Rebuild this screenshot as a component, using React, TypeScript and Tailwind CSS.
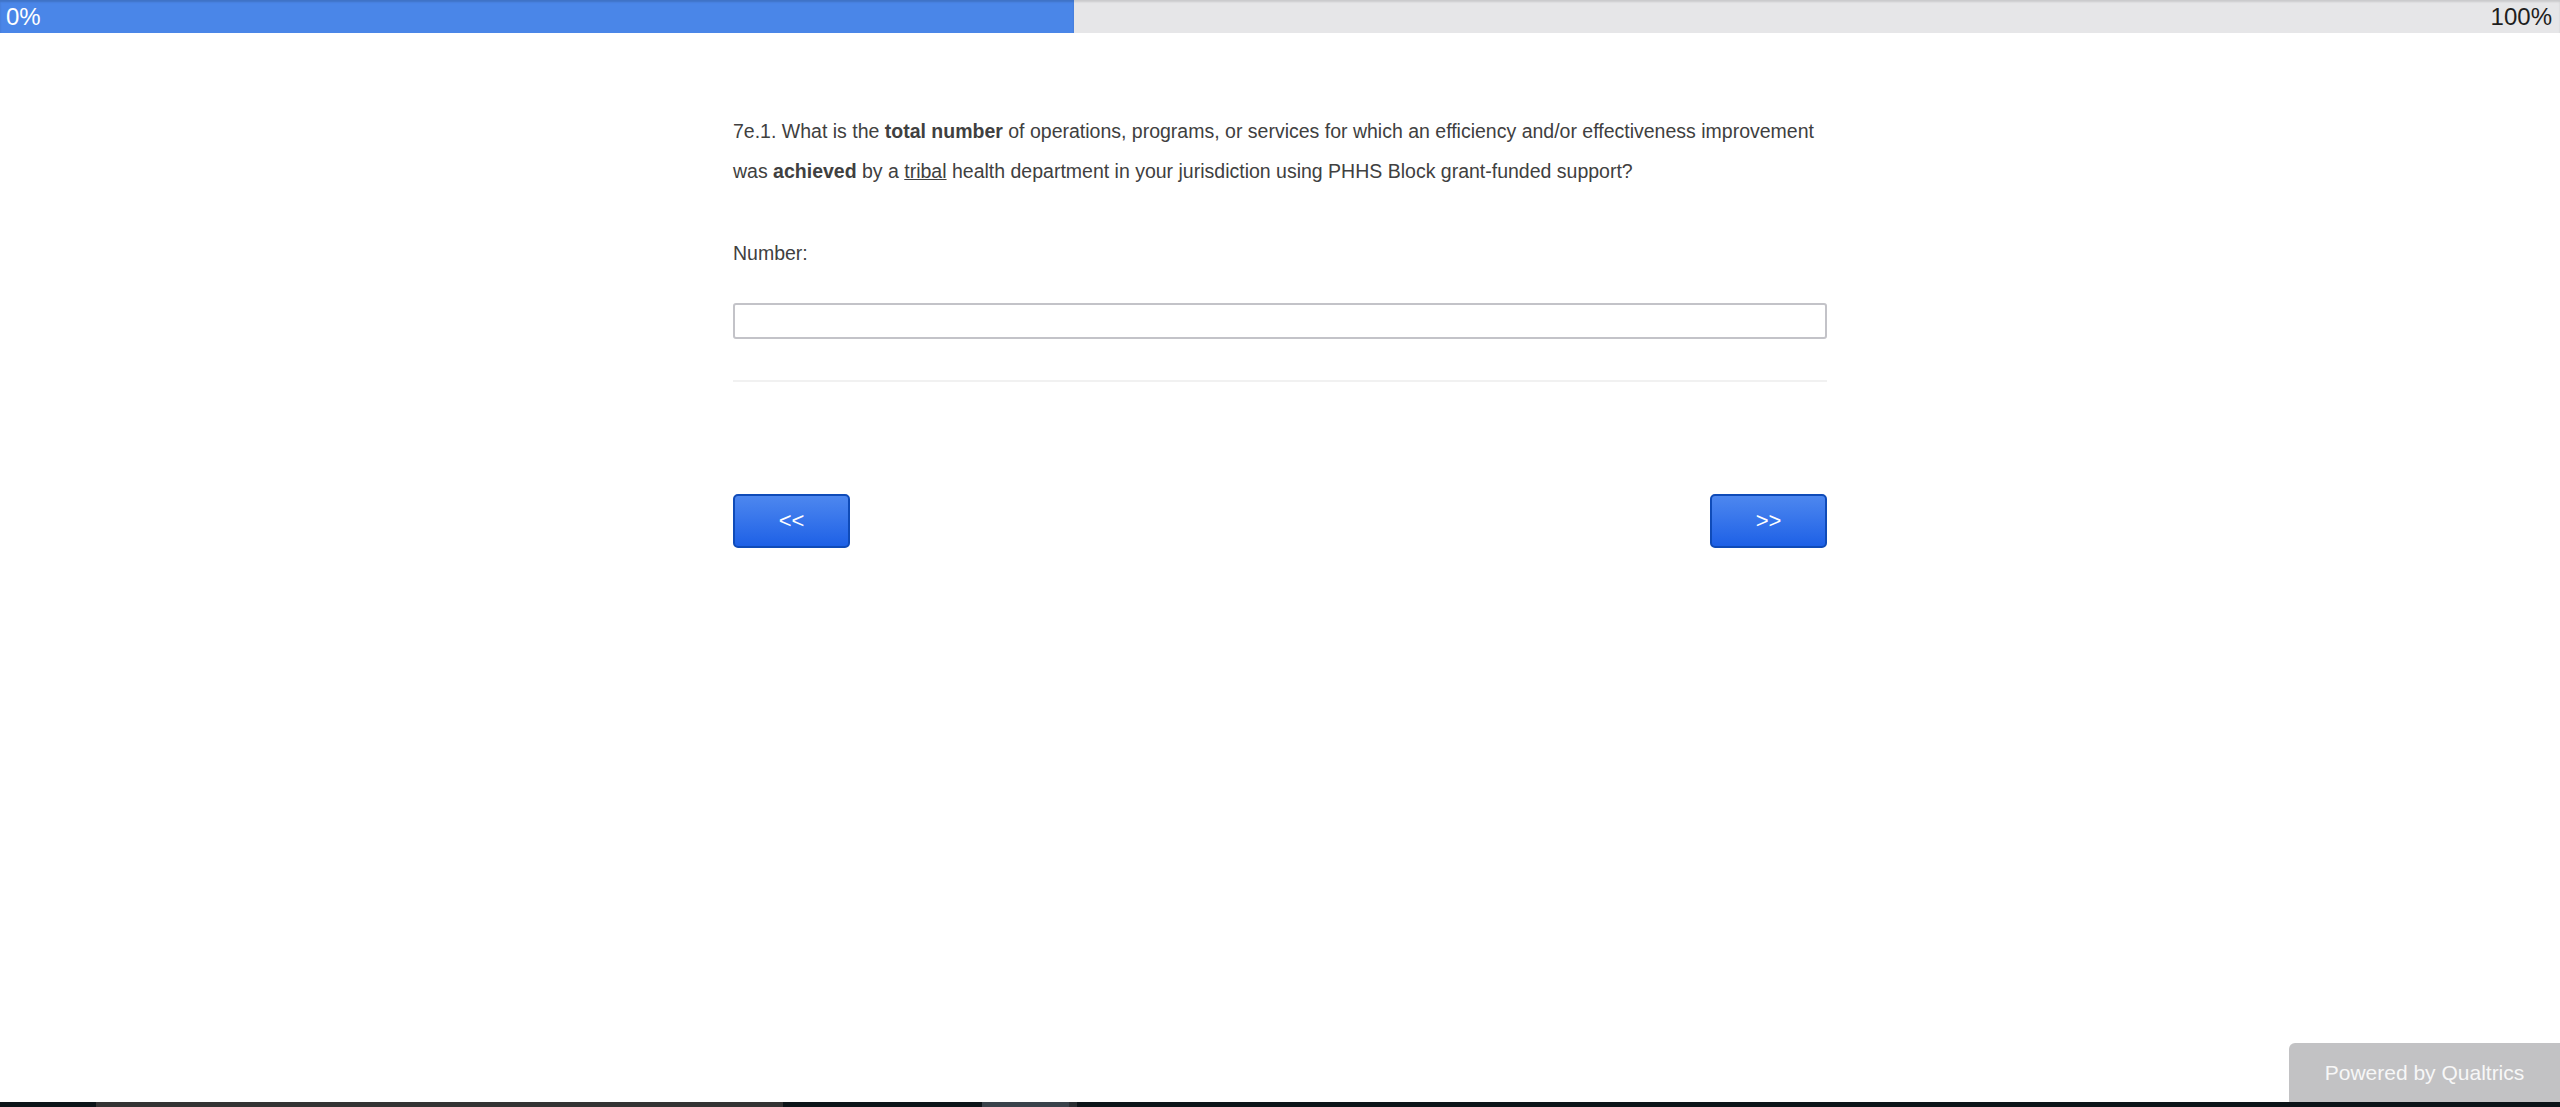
import React, { useState } from "react";

const App = () => {
  const [value, setValue] = useState("");

  return (
    <div className="h-[1107px] flex flex-col bg-white font-['Liberation_Sans',Arial,sans-serif] overflow-hidden">
      {/* progress bar */}
      <div className="relative h-[33px] bg-[#e6e6e8] shadow-[inset_0_2px_2px_rgba(0,0,0,0.12)]">
        <div className="absolute inset-y-0 left-0 w-[1074px] bg-[#4a86e8] shadow-[inset_0_2px_2px_rgba(0,0,0,0.15)]" />
        <div className="relative flex justify-between items-center h-full px-[6px] text-[24px] leading-none">
          <span className="text-white">0%</span>
          <span className="text-[#1e1e1e] pr-[2px]">100%</span>
        </div>
      </div>

      {/* question */}
      <div className="w-[1094px] mx-auto mt-[78px] text-[#404040]">
        <div className="text-[19.5px] leading-[40px]">
          <p>
            7e.1. What is the <b>total number</b> of operations, programs, or services for which an
            efficiency and/or effectiveness improvement was <b>achieved</b> by a{" "}
            <u>tribal</u> health department in your jurisdiction using PHHS Block grant-funded support?
          </p>
          <p className="mt-[42px]">Number:</p>
        </div>

        <input
          type="text"
          value={value}
          onChange={(e) => setValue(e.target.value)}
          className="block w-full h-[36px] mt-[30px] border-2 border-[#c3c3c8] rounded-[3px] px-2 outline-none"
        />

        <div className="h-[2px] bg-[#f1f1f1] mt-[41px]" />

        <div className="flex justify-between mt-[112px]">
          <button className="w-[117px] h-[54px] rounded-[5px] border-2 border-[#0f4bb8] bg-gradient-to-b from-[#4d87ef] to-[#1d60e6] text-white text-[22px] leading-none">
            &lt;&lt;
          </button>
          <button className="w-[117px] h-[54px] rounded-[5px] border-2 border-[#0f4bb8] bg-gradient-to-b from-[#4d87ef] to-[#1d60e6] text-white text-[22px] leading-none">
            &gt;&gt;
          </button>
        </div>
      </div>

      <div className="flex-1" />

      {/* footer */}
      <div className="flex justify-end">
        <a className="w-[271px] h-[59px] rounded-tl-[6px] bg-[#c2c2c4] text-[#f7f7f7] text-[21px] flex items-center justify-center">
          Powered by Qualtrics
        </a>
      </div>

      <div className="h-[5px] flex">
        <div className="w-[96px] bg-[#0c1418]" />
        <div className="w-[687px] bg-[#333333]" />
        <div className="w-[199px] bg-[#0c1418]" />
        <div className="w-[87px] bg-[#39424a]" />
        <div className="w-[8px] bg-[#2a2f33]" />
        <div className="flex-1 bg-[#0c1418]" />
      </div>
    </div>
  );
};

export default App;
